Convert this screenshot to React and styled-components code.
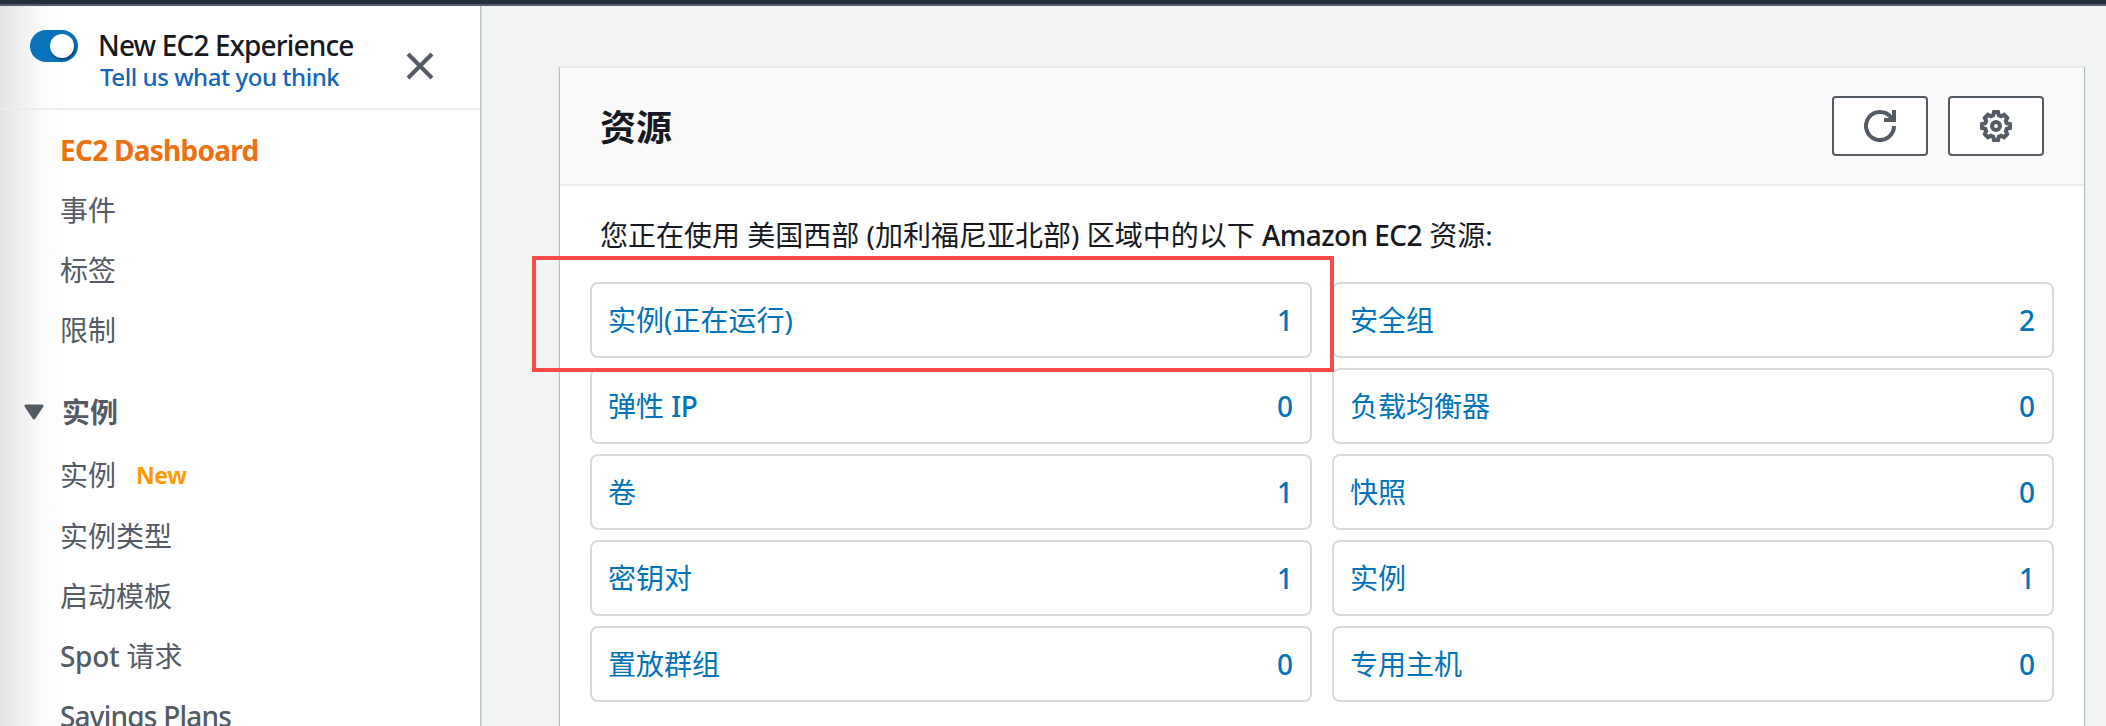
import React from "react";
import styled, { createGlobalStyle, css } from "styled-components";

const GlobalStyle = createGlobalStyle`
  * { box-sizing: border-box; }
  body {
    margin: 0;
    font-family: "Noto Sans", "Noto Sans CJK SC", sans-serif;
    font-size: 28px;
    line-height: 40px;
    color: #16191f;
    background: #f2f3f3;
  }
`;

const Page = styled.div`
  display: flex;
  flex-direction: column;
  height: 726px;
  overflow: hidden;
`;
const TopBar = styled.div`
  flex: none;
  height: 6px;
  background: #232f3e;
  border-bottom: 2px solid #545b68;
`;
const Body = styled.div`
  display: flex;
  flex: 1;
  min-height: 0;
`;
const Sidebar = styled.aside`
  flex: none;
  width: 480px;
  overflow: hidden;
  background: linear-gradient(to right, #e4e4e4 0, #f0f0f0 20px, #fafafa 42px, #fff 64px);
`;
const Edge = styled.div`
  flex: none;
  width: 2px;
  background: linear-gradient(to right, #b8c1c6 0 1px, #dfe3e4 1px 2px);
`;
const SideHeader = styled.header`
  display: flex;
  height: 104px;
  padding: 24px 46px 0 30px;
  border-bottom: 2px solid #eaeded;
`;
const Toggle = styled.span`
  display: flex;
  justify-content: flex-end;
  width: 48px;
  height: 32px;
  padding: 4px;
  border-radius: 16px;
  background: #0873bb;
`;
const Knob = styled.span`
  width: 24px;
  height: 24px;
  border-radius: 50%;
  background: #fff;
  box-shadow: 1px 2px 2px rgba(0, 20, 50, 0.5);
`;
const HeaderText = styled.div`
  display: flex;
  flex: 1;
  flex-direction: column;
  margin-left: 20px;
  white-space: nowrap;
`;
const Latin = styled.span`
  font-weight: ${(p) => p.$weight || 500};
  letter-spacing: ${(p) => p.$track || 0}px;
`;
const HeaderTitle = styled(Latin)`
  line-height: 31px;
`;
const Feedback = styled(Latin)`
  margin-left: 2px;
  font-size: 24px;
  line-height: 32px;
  color: #1166bb;
`;
const CloseIcon = styled.svg`
  width: 28px;
  height: 28px;
  margin-top: 22px;
`;
const Nav = styled.nav`
  padding-top: 10px;
`;
const NavRow = styled.a`
  display: flex;
  align-items: center;
  height: ${(p) => p.$height || 60}px;
  padding: 0 0 1px 60px;
  color: #545b64;
  white-space: pre;
  ${(p) => p.$active && css`
    color: #ec7211;
  `}
`;
const SectionRow = styled.div`
  display: flex;
  align-items: center;
  height: 40px;
  margin: 32px 0 12px;
  padding-left: 24px;
  gap: 18px;
  color: #545b64;
  font-weight: 700;
`;
const Caret = styled.svg`
  width: 20px;
  height: 16px;
`;
const Badge = styled(Latin)`
  margin-left: 20px;
  color: #ff9900;
  font-size: 23px;
`;
const Main = styled.main`
  flex: 1;
  min-width: 0;
  padding: 60px 22px 0 78px;
`;
const Card = styled.section`
  height: 700px;
  background: #fff;
  border-top: 2px solid #eaeded;
  box-shadow: -1px 1px 1px #b8bec2, 1px 1px 1px #b3bdc1;
`;
const CardHeader = styled.header`
  display: flex;
  align-items: center;
  height: 118px;
  padding: 0 40px;
  gap: 20px;
  background: #fafafa;
  border-bottom: 2px solid #eaeded;
`;
const CardTitle = styled.h2`
  flex: 1;
  margin: 0;
  padding-top: 4px;
  font-size: 36px;
  font-weight: 700;
`;
const IconButton = styled.button`
  display: flex;
  align-items: center;
  justify-content: center;
  width: 96px;
  height: 60px;
  padding: 0;
  color: #545b64;
  background: #fff;
  border: 2px solid #545b64;
  border-radius: 4px;
  svg {
    width: 32px;
    height: 32px;
  }
`;
const Intro = styled.p`
  margin: 0;
  padding: 29px 40px 27px;
  white-space: nowrap;
`;
const Grid = styled.div`
  display: grid;
  grid-template-columns: 1fr 1fr;
  gap: 10px 20px;
  padding: 0 30px;
`;
const Cell = styled.a`
  position: relative;
  display: flex;
  align-items: center;
  justify-content: space-between;
  height: 76px;
  padding: 0 17px 1px 16px;
  color: #0073bb;
  border: 2px solid #d5dbdb;
  border-radius: 8px;
`;
const Highlight = styled.span`
  position: absolute;
  z-index: 1;
  top: -28px;
  left: -60px;
  width: 802px;
  height: 116px;
  border: 4px solid #f84b45;
`;

const RESOURCES = [
  ["实例(正在运行)", 1, true],
  ["安全组", 2],
  [<>弹性 <Latin $track={-0.4}>IP</Latin></>, 0],
  ["负载均衡器", 0],
  ["卷", 1],
  ["快照", 0],
  ["密钥对", 1],
  ["实例", 1],
  ["置放群组", 0],
  ["专用主机", 0],
];

export default function App() {
  return (
    <Page>
      <GlobalStyle />
      <TopBar />
      <Body>
        <Sidebar>
          <SideHeader>
            <Toggle><Knob /></Toggle>
            <HeaderText>
              <HeaderTitle $track={-0.85}>New EC2 Experience</HeaderTitle>
              <Feedback $track={-0.45}>Tell us what you think</Feedback>
            </HeaderText>
            <CloseIcon viewBox="0 0 28 28" fill="none" stroke="#545b64" strokeWidth="4">
              <path d="M2 2l24 24M26 2L2 26" />
            </CloseIcon>
          </SideHeader>
          <Nav>
            <NavRow $active><Latin $weight={700} $track={-0.75}>EC2 Dashboard</Latin></NavRow>
            <NavRow>事件</NavRow>
            <NavRow>标签</NavRow>
            <NavRow>限制</NavRow>
            <SectionRow>
              <Caret viewBox="0 0 20 16">
                <path d="M2 2h16l-8 12z" fill="#545b64" stroke="#545b64" strokeWidth="3" strokeLinejoin="round" />
              </Caret>
              实例
            </SectionRow>
            <NavRow $height={62}>实例<Badge $weight={700} $track={-0.4}>New</Badge></NavRow>
            <NavRow>实例类型</NavRow>
            <NavRow>启动模板</NavRow>
            <NavRow><Latin $track={-0.3}>Spot </Latin>请求</NavRow>
            <NavRow><Latin $track={-0.8}>Savings Plans</Latin></NavRow>
          </Nav>
        </Sidebar>
        <Edge />
        <Main>
          <Card>
            <CardHeader>
              <CardTitle>资源</CardTitle>
              <IconButton aria-label="refresh">
                <svg viewBox="0 0 16 16" fill="none" stroke="currentColor" strokeWidth="2">
                  <path d="M15 8a7 7 0 1 1-1.400-4.200l.7 1.200M10 5h5V0" />
                </svg>
              </IconButton>
              <IconButton aria-label="settings">
                <svg viewBox="0 0 16 16" fill="none" stroke="currentColor" strokeWidth="2">
                  <circle cx="8" cy="8" r="2" />
                  <path d="M7 1h2l.4 1.6 1.2.5L12 2.4 13.6 4l-.7 1.4.5 1.2L15 7v2l-1.6.4-.5 1.2.7 1.4-1.6 1.6-1.4-.7-1.2.5L9 15H7l-.4-1.6-1.2-.5-1.4.7L2.4 12l.7-1.4-.5-1.2L1 9V7l1.6-.4.5-1.2L2.4 4 4 2.4l1.4.7 1.2-.5z" />
                </svg>
              </IconButton>
            </CardHeader>
            <Intro>
              您正在使用 美国西部 (加利福尼亚北部) 区域中的以下 <Latin $track={-0.55}>Amazon EC2</Latin> 资源:
            </Intro>
            <Grid>
              {RESOURCES.map(([label, count, marked], i) => (
                <Cell key={i}>
                  <span>{label}</span>
                  <Latin>{count}</Latin>
                  {marked && <Highlight />}
                </Cell>
              ))}
            </Grid>
          </Card>
        </Main>
      </Body>
    </Page>
  );
}
